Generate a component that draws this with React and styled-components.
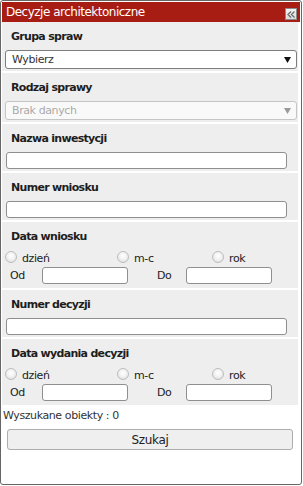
import React from 'react';
import styled, { createGlobalStyle } from 'styled-components';

const GlobalStyle = createGlobalStyle`
  html, body {
    margin: 0;
    padding: 0;
    background: #fff;
  }
  body {
    font-family: 'DejaVu Sans', Verdana, sans-serif;
  }
`;

const Panel = styled.div`
  box-sizing: border-box;
  width: 302px;
  height: 485px;
  border: 1px solid #666;
  border-radius: 3px;
  padding: 1px;
  background: #fff;
  font-family: 'DejaVu Sans', Verdana, sans-serif;
  font-size: 11px;
  letter-spacing: -0.4px;
  color: #222;
`;

const Header = styled.div`
  display: flex;
  justify-content: space-between;
  align-items: flex-start;
  height: 20px;
  padding: 0 3px 0 4px;
  background: #a81d13;
  color: #fff;
`;

const Title = styled.span`
  font-size: 12px;
  line-height: 21px;
  letter-spacing: -0.5px;
`;

const CollapseButton = styled.div`
  box-sizing: border-box;
  width: 12px;
  height: 12px;
  margin-top: 6px;
  border: 1px solid #8a8a8a;
  background: linear-gradient(#f4f4f4, #dcdcdc);
  display: flex;
  align-items: center;
  justify-content: center;
`;

const Section = styled.div`
  margin: 0 2px 2px 0;
  padding: 0 0 ${(p) => (p.$dates ? 4 : 2)}px 3px;
  background: #eeeeee;
  &:first-of-type {
    margin-top: 2px;
  }
`;

const Label = styled.div`
  height: 28px;
  padding-top: 1px;
  box-sizing: border-box;
  line-height: 27px;
  padding-left: 6px;
  font-weight: bold;
  letter-spacing: -0.7px;
  color: #1e1e1e;
`;

const SelectWrap = styled.div`
  position: relative;
  width: 292px;
  height: 19px;
`;

const Select = styled.select`
  appearance: none;
  box-sizing: border-box;
  width: 100%;
  height: 19px;
  margin: 0;
  padding: 0 0 0 6px;
  border: 1px solid ${(p) => (p.disabled ? '#b4b4b4' : '#7d7d7d')};
  border-radius: 3px;
  background: #fff;
  font-family: inherit;
  font-size: 11px;
  letter-spacing: -0.4px;
  color: ${(p) => (p.disabled ? '#8c8c8c' : '#333')};
  outline: none;
`;

const Arrow = styled.svg`
  position: absolute;
  right: 6px;
  top: 7px;
  pointer-events: none;
`;

const TextInput = styled.input`
  box-sizing: border-box;
  display: block;
  width: ${(p) => p.$w || 281}px;
  height: 17px;
  margin: 0 0 0 ${(p) => (p.$inline ? 0 : 1)}px;
  padding: 0 3px;
  border: 1px solid #8f8f8f;
  border-radius: 3px;
  background: #fff;
  font-family: inherit;
  font-size: 11px;
  outline: none;
`;

const RadioRow = styled.div`
  display: grid;
  grid-template-columns: 112px 95px auto;
  height: 17px;
  align-items: center;
`;

const RadioLabel = styled.label`
  display: flex;
  align-items: center;
  color: #222;
`;

const Radio = styled.input.attrs({ type: 'radio' })`
  appearance: none;
  box-sizing: border-box;
  width: 12px;
  height: 12px;
  margin: 0 5px 3px 0;
  border: 1px solid #bdbdbd;
  border-radius: 50%;
  background: radial-gradient(circle at 50% 40%, #ffffff 0%, #f2f2f2 45%, #d8d8d8 100%);
`;

const RangeRow = styled.div`
  display: grid;
  grid-template-columns: 37px 86px 58px 86px;
  height: 17px;
  align-items: center;
`;

const RangeLabel = styled.span`
  padding-left: ${(p) => p.$pad}px;
  color: #222;
`;

const Info = styled.div`
  padding: 2px 0 0 1px;
  line-height: 14px;
  color: #333;
`;

const SearchButton = styled.button`
  display: block;
  box-sizing: border-box;
  width: 286px;
  height: 21px;
  margin: 6px 0 0 5px;
  padding: 0;
  border: 1px solid #adadad;
  border-radius: 3px;
  background: #efefef;
  font-family: inherit;
  font-size: 12px;
  letter-spacing: -0.3px;
  color: #222;
`;

const DownArrow = ({ color }) => (
  <Arrow width="7" height="6" viewBox="0 0 7 6">
    <path d="M0 0 H7 L3.5 6 Z" fill={color} />
  </Arrow>
);

const DropdownField = ({ label, value, disabled }) => (
  <Section>
    <Label>{label}</Label>
    <SelectWrap>
      <Select disabled={disabled} defaultValue={value}>
        <option value={value}>{value}</option>
      </Select>
      <DownArrow color={disabled ? '#9a9a9a' : '#111'} />
    </SelectWrap>
  </Section>
);

const TextField = ({ label }) => (
  <Section>
    <Label>{label}</Label>
    <TextInput type="text" />
  </Section>
);

const DateField = ({ label, name }) => (
  <Section $dates>
    <Label>{label}</Label>
    <RadioRow>
      <RadioLabel>
        <Radio name={name} />
        dzień
      </RadioLabel>
      <RadioLabel>
        <Radio name={name} />
        m-c
      </RadioLabel>
      <RadioLabel>
        <Radio name={name} />
        rok
      </RadioLabel>
    </RadioRow>
    <RangeRow>
      <RangeLabel $pad={5}>Od</RangeLabel>
      <TextInput type="text" $w={86} $inline />
      <RangeLabel $pad={29}>Do</RangeLabel>
      <TextInput type="text" $w={86} $inline />
    </RangeRow>
  </Section>
);

const App = () => {
  return (
    <>
      <GlobalStyle />
      <Panel>
        <Header>
          <Title>Decyzje architektoniczne</Title>
          <CollapseButton>
            <svg width="8" height="7" viewBox="0 0 8 7">
              <path d="M4 0.5 L1 3.5 L4 6.5 M7.5 0.5 L4.5 3.5 L7.5 6.5" fill="none" stroke="#6e6e6e" strokeWidth="1.3" />
            </svg>
          </CollapseButton>
        </Header>
        <DropdownField label="Grupa spraw" value="Wybierz" />
        <DropdownField label="Rodzaj sprawy" value="Brak danych" disabled />
        <TextField label="Nazwa inwestycji" />
        <TextField label="Numer wniosku" />
        <DateField label="Data wniosku" name="dataWniosku" />
        <TextField label="Numer decyzji" />
        <DateField label="Data wydania decyzji" name="dataDecyzji" />
        <Info>Wyszukane obiekty : 0</Info>
        <SearchButton type="button">Szukaj</SearchButton>
      </Panel>
    </>
  );
};

export default App;
